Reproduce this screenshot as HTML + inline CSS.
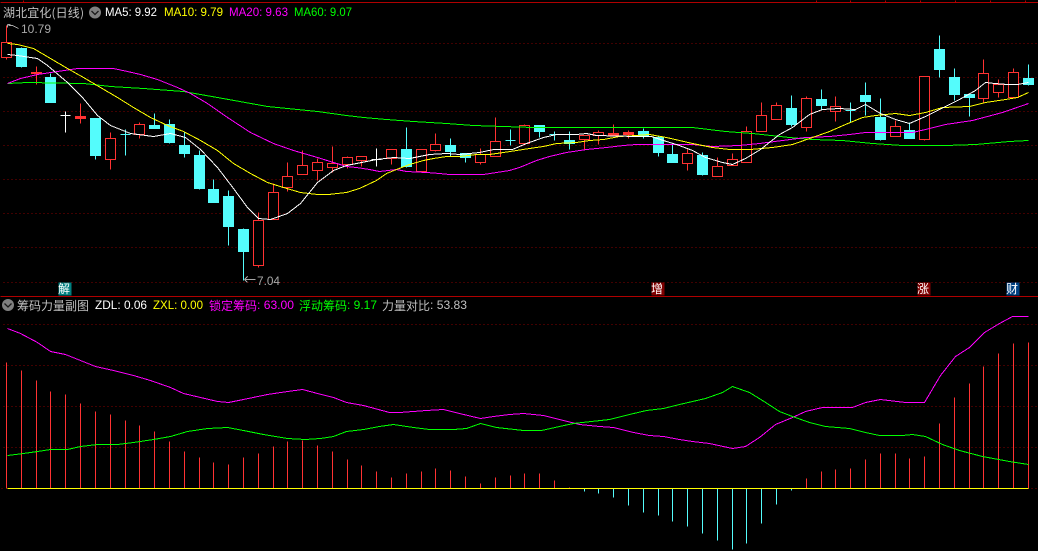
<!DOCTYPE html>
<html><head><meta charset="utf-8"><style>
html,body{margin:0;padding:0;background:#000;width:1038px;height:551px;overflow:hidden}
svg{display:block}
text{font-family:"Liberation Sans","WenQuanYi Zen Hei","Noto Sans CJK SC",sans-serif;font-size:12px}
.c{font-family:"WenQuanYi Zen Hei","Noto Sans CJK SC","Liberation Sans",sans-serif}
</style></head><body>
<svg width="1038" height="551" viewBox="0 0 1038 551" xmlns="http://www.w3.org/2000/svg">
<rect width="1038" height="551" fill="#000"/>
<g transform="translate(.5 .5)" shape-rendering="crispEdges" fill="none" stroke-width="1">
<path stroke="#b00000" d="M0 2H1038M0 296H1038M23 0V2M816 0V2M850 0V2M885 0V2M920 0V2M955 0V2M990 0V2M1025 0V2"/>
<path stroke="#840000" stroke-dasharray="1 3" d="M3 43H1038M3 77H1038M3 111H1038M3 145H1038M3 179H1038M3 213H1038M3 247H1038M3 282H1038M3 324H1038M3 365H1038M3 406H1038M3 447H1038M1 488H5M1031 488H1038"/>

<!-- red candles -->
<path stroke="#ff3232" fill="#000" d="M6 25V42M6 57V59M1 42H11V57H1ZM110 132V138M110 159V169M105 138H115V159H105ZM139 122V124M139 134V138M134 124H144V134H134ZM258 212V220M258 265V267M253 220H263V265H253ZM273 183V192M268 192H278V219H268ZM287 162V176M287 187V191M282 176H292V187H282ZM302 150V165M297 165H307V174H297ZM317 158V162M317 170V180M312 162H322V170H312ZM332 146V163M332 167V172M327 163H337V167H327ZM347 156V157M347 164V168M342 157H352V164H342ZM361 160V166M356 156H366V160H356ZM391 158V164M386 149H396V158H386ZM421 171V172M416 149H426V171H416ZM435 133V144M435 150V151M430 144H440V150H430ZM480 148V154M480 162V164M475 154H485V162H475ZM495 117V141M490 141H500V156H490ZM524 124V125M519 125H529V143H519ZM584 139V150M579 135H589V139H579ZM598 130V132M598 135V144M593 132H603V135H593ZM687 148V153M687 163V170M682 153H692V163H682ZM717 157V166M712 166H722V176H712ZM732 153V159M727 159H737V165H727ZM746 126V131M741 131H751V162H741ZM761 102V115M756 115H766V131H756ZM776 102V105M771 105H781V119H771ZM806 96V98M806 127V131M801 98H811V127H801ZM835 96V106M835 111V121M830 106H840V111H830ZM895 120V126M890 126H900V136H890ZM924 139V140M919 76H929V139H919ZM983 59V73M983 98V102M978 73H988V98H978ZM998 79V84M998 92V97M993 84H1003V92H993ZM1013 68V72M1008 72H1018V97H1008Z"/>
<path stroke="#ff3232" fill="#ff3232" d="M36 66V84M31 72H41V73H31ZM80 103V123M75 116H85V118H75ZM613 124V135M608 133H618V135H608ZM628 130V138M623 132H633V134H623Z"/>
<!-- cyan candles -->
<path stroke="#54fcfc" fill="#54fcfc" d="M21 47V48M21 66V67M16 48H26V66H16ZM50 73V77M45 77H55V102H45ZM95 155V159M90 118H100V155H90ZM154 113V125M149 125H159V128H149ZM169 119V124M169 142V143M164 124H174V142H164ZM184 132V145M184 153V157M179 145H189V153H179ZM199 150V155M199 188V189M194 155H204V188H194ZM213 179V189M208 189H218V202H208ZM228 190V196M228 226V245M223 196H233V226H223ZM243 228V229M243 251V280M238 229H248V251H238ZM406 127V149M406 166V167M401 149H411V166H401ZM450 138V145M450 151V156M445 145H455V151H445ZM465 157V162M460 153H470V157H460ZM539 131V137M534 125H544V131H534ZM569 131V140M569 143V149M564 140H574V143H564ZM643 128V131M643 135V138M638 131H648V135H638ZM658 135V137M658 152V156M653 137H663V152H653ZM672 143V154M667 154H677V162H667ZM702 152V155M702 174V175M697 155H707V174H697ZM791 95V108M791 124V126M786 108H796V124H786ZM821 89V99M821 105V110M816 99H826V105H816ZM865 82V95M865 101V115M860 95H870V101H860ZM880 98V117M880 139V140M875 117H885V139H875ZM909 122V130M904 130H914V138H904ZM939 35V49M939 69V77M934 49H944V69H934ZM954 68V77M954 94V100M949 77H959V94H949ZM969 93V94M969 97V116M964 94H974V97H964ZM1028 64V78M1028 84V85M1023 78H1033V84H1023Z"/>
<path stroke="#54fcfc" d="M125 129V155M120 134H130M510 129V145M505 140H515M554 131V140M549 134H559M850 102V122M845 110H855"/>
<path stroke="#fff" d="M65 111V132M60 115H70M376 148V166M371 159H381"/>

<!-- MA lines -->
<polyline stroke="#00ff00" points="7,83 27,82 83,83 110,86 143,88 183,91 217,97 267,106 317,111 346,115 363,117 386,119 413,121 446,123 473,125 533,127 692,127 725,131 752,133 789,137 812,139 842,140 872,143 902,145 945,145 975,144 1009,141 1028,140"/>
<polyline stroke="#ff00ff" points="7,83 20,78 37,74 57,71 77,68 113,68 127,71 140,74 157,79 177,87 190,93 207,103 227,117 250,132 273,143 293,150 317,157 333,162 346,166 356,167 369,169 379,171 396,169 406,171 426,172 439,173 449,174 483,174 496,172 509,170 519,167 536,160 549,156 566,152 586,149 606,147 623,145 636,144 659,144 692,144 712,146 739,145 759,143 782,140 805,137 829,136 849,134 865,132 912,132 925,129 945,124 972,120 1002,112 1028,103"/>
<polyline stroke="#ffff00" points="7,43 17,44 33,48 50,58 67,68 83,77 100,87 117,97 133,107 150,117 167,125 183,131 200,140 217,150 233,163 250,173 267,182 283,187 300,192 317,194 328,194 346,192 359,188 376,180 386,173 396,169 409,164 423,160 433,158 446,156 459,156 476,154 489,154 503,152 516,150 529,148 543,146 556,143 576,142 589,140 603,139 619,136 636,135 649,134 666,137 679,140 692,143 712,147 729,149 750,149 772,147 792,144 812,137 829,131 845,124 862,117 875,115 895,113 909,115 925,112 942,107 969,106 985,102 1005,99 1017,97 1028,92"/>
<polyline stroke="#ffffff" points="7,54 17,55 30,57 37,58 47,65 67,82 82,97 97,115 110,125 130,133 153,136 170,133 185,137 200,149 217,167 233,188 247,207 258,218 270,219 287,213 300,203 317,182 333,170 346,165 361,162 376,159 393,157 409,158 429,154 446,153 459,154 479,152 493,149 512,149 526,143 543,137 556,134 576,134 586,133 596,135 636,136 651,136 666,141 676,144 692,150 705,157 722,162 732,164 745,158 760,149 779,134 792,127 809,114 822,109 839,108 855,109 865,104 880,113 895,119 909,123 925,116 945,106 959,99 975,90 985,82 994,83 1007,84 1017,84 1028,82"/>

<!-- lower panel bars -->
<path stroke="#ff3232" d="M6 488V362M21 488V370M36 488V380M50 488V391M65 488V394M80 488V403M95 488V411M110 488V414M125 488V420M139 488V425M154 488V431M169 488V441M184 488V451M199 488V457M213 488V462M228 488V464M243 488V457M258 488V453M273 488V446M287 488V441M302 488V440M317 488V445M332 488V451M347 488V459M361 488V465M376 488V471M391 488V477M406 488V473M421 488V471M435 488V468M450 488V470M465 488V476M480 488V483M495 488V477M510 488V475M524 488V473M539 488V473M554 488V480M569 488V487M806 488V478M821 488V471M835 488V469M850 488V468M865 488V459M880 488V453M895 488V453M909 488V458M924 488V456M939 488V423M954 488V397M969 488V383M983 488V366M998 488V353M1013 488V343M1028 488V342"/>
<path stroke="#54fcfc" d="M584 488V491M598 488V493M613 488V497M628 488V505M643 488V512M658 488V515M672 488V521M687 488V526M702 488V533M717 488V540M732 488V549M746 488V543M761 488V523M776 488V504M791 488V490"/>
<path stroke="#ffff00" d="M7 488H1028"/>
<polyline stroke="#ff00ff" points="7,328 20,333 37,342 50,351 65,354 80,360 95,366 113,370 133,375 150,380 170,387 183,393 200,397 217,401 228,402 243,399 267,394 287,391 302,389 317,393 333,397 346,402 363,405 389,412 399,412 426,410 443,409 459,413 480,418 493,416 509,414 523,413 543,415 559,419 579,424 599,426 613,427 633,432 649,435 663,436 679,439 692,441 709,443 732,448 745,446 759,437 775,424 792,417 805,411 822,407 852,407 865,402 880,399 905,402 924,402 940,375 955,356 969,347 984,332 999,323 1012,316 1028,316"/>
<polyline stroke="#00ff00" points="7,455 23,453 37,451 50,449 67,449 80,446 97,444 117,444 133,442 153,439 170,436 187,431 207,428 227,427 243,430 263,434 287,438 305,439 320,438 333,436 346,431 363,429 379,426 393,424 413,427 429,429 453,429 466,428 480,423 496,427 523,430 541,430 559,426 573,423 609,419 629,414 646,410 663,408 679,404 692,401 705,398 722,392 732,386 749,392 762,400 779,411 792,416 809,422 825,426 849,428 865,432 879,435 902,435 912,434 925,436 942,444 959,450 982,456 1009,461 1028,464"/>

<!-- price arrows -->
<path stroke="#a8a8a8" d="M7 24H10M7 24V27M8 25H12L18 28"/>
<path stroke="#a8a8a8" d="M244 279H255M244 279L247 276M244 279L247 282"/>

<!-- marker boxes -->
<rect x="58" y="282" width="13" height="13" fill="#008080" stroke="none"/>
<rect x="651" y="282" width="13" height="13" fill="#800000" stroke="none"/>
<rect x="917" y="282" width="13" height="13" fill="#800000" stroke="none"/>
<rect x="1006" y="282" width="13" height="13" fill="#004080" stroke="none"/>
</g>

<text class="c" x="58" y="293" fill="#fff">解</text>
<text class="c" x="651" y="293" fill="#fff">增</text>
<text class="c" x="917" y="293" fill="#fff">涨</text>
<text class="c" x="1006" y="293" fill="#fff">财</text>

<text x="21" y="33" fill="#a8a8a8" textLength="30" lengthAdjust="spacingAndGlyphs">10.79</text>
<text x="257" y="285" fill="#a8a8a8" textLength="23" lengthAdjust="spacingAndGlyphs">7.04</text>

<!-- header upper -->
<text class="c" x="3" y="17" fill="#c0c0c0" textLength="81">湖北宜化(日线)</text>
<circle cx="95" cy="12.5" r="6" fill="#808080"/>
<path d="M91.5 11L95 14.5L98.5 11" stroke="#1a1a1a" stroke-width="1.3" fill="none"/>
<text x="105" y="16" fill="#fff" textLength="52" lengthAdjust="spacingAndGlyphs">MA5: 9.92</text>
<text x="164" y="16" fill="#ffff00" textLength="59" lengthAdjust="spacingAndGlyphs">MA10: 9.79</text>
<text x="229" y="16" fill="#ff00ff" textLength="59" lengthAdjust="spacingAndGlyphs">MA20: 9.63</text>
<text x="294" y="16" fill="#00ff00" textLength="58" lengthAdjust="spacingAndGlyphs">MA60: 9.07</text>

<!-- header lower -->
<circle cx="8" cy="305" r="6" fill="#808080"/>
<path d="M4.5 303.5L8 307L11.5 303.5" stroke="#1a1a1a" stroke-width="1.3" fill="none"/>
<text class="c" x="17" y="310" fill="#c0c0c0">筹码力量副图</text>
<text x="95" y="309" fill="#fff" textLength="52" lengthAdjust="spacingAndGlyphs">ZDL: 0.06</text>
<text x="153" y="309" fill="#ffff00" textLength="50" lengthAdjust="spacingAndGlyphs">ZXL: 0.00</text>
<text class="c" x="209" y="310" fill="#ff00ff">锁定筹码</text>
<text x="257" y="309" fill="#ff00ff" textLength="37" lengthAdjust="spacingAndGlyphs">: 63.00</text>
<text class="c" x="299" y="310" fill="#00ff00">浮动筹码</text>
<text x="347" y="309" fill="#00ff00" textLength="30" lengthAdjust="spacingAndGlyphs">: 9.17</text>
<text class="c" x="382" y="310" fill="#c0c0c0">力量对比</text>
<text x="430" y="309" fill="#c0c0c0" textLength="37" lengthAdjust="spacingAndGlyphs">: 53.83</text>
</svg>
</body></html>
